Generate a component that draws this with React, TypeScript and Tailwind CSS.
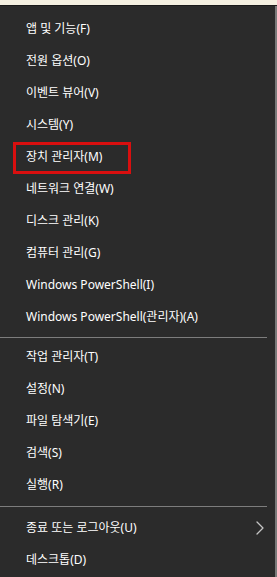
import { ChevronRight } from "lucide-react";

type Item = { label: string; highlight?: boolean; submenu?: boolean };

const groups: Item[][] = [
  [
    { label: "앱 및 기능(F)" },
    { label: "전원 옵션(O)" },
    { label: "이벤트 뷰어(V)" },
    { label: "시스템(Y)" },
    { label: "장치 관리자(M)", highlight: true },
    { label: "네트워크 연결(W)" },
    { label: "디스크 관리(K)" },
    { label: "컴퓨터 관리(G)" },
    { label: "Windows PowerShell(I)" },
    { label: "Windows PowerShell(관리자)(A)" },
  ],
  [
    { label: "작업 관리자(T)" },
    { label: "설정(N)" },
    { label: "파일 탐색기(E)" },
    { label: "검색(S)" },
    { label: "실행(R)" },
  ],
  [{ label: "종료 또는 로그아웃(U)", submenu: true }, { label: "데스크톱(D)" }],
];

function Row({ item }: { item: Item }) {
  return (
    <li className="relative flex h-8 items-center pl-[26px] pr-[14px] text-[12px] text-white">
      <span className="flex-1">{item.label}</span>
      {item.submenu && (
        <ChevronRight className="-mr-[11px] h-6 w-6 text-[#c4c4c4]" strokeWidth={1.3} />
      )}
      {item.highlight && (
        <span className="pointer-events-none absolute left-[13px] top-px h-[32px] w-[118px] border-[3px] border-[#d90f0f]" />
      )}
    </li>
  );
}

export default function App() {
  return (
    <div
      className="flex h-[577px] w-[277px] flex-col overflow-hidden bg-[#2b2b2b]"
      style={{ fontFamily: '"Noto Sans", "Noto Sans CJK KR", sans-serif' }}
    >
      <div className="h-[5px] bg-[#f5f0e1]" />
      <div className="h-px bg-[#1a1a1a]" />
      <div className="flex flex-1">
        <div className="flex-1 pt-[7px]">
          {groups.map((g, i) => (
            <div key={i}>
              {i === 1 && (
                <div className="flex h-2 items-center pr-[8px]">
                  <div className="h-px w-full bg-[#7d7d7d]" />
                </div>
              )}
              {i === 2 && (
                <div className="flex h-[11px] items-center pr-[8px]">
                  <div className="h-px w-full bg-[#7d7d7d]" />
                </div>
              )}
              <ul>
                {g.map((item) => (
                  <Row key={item.label} item={item} />
                ))}
              </ul>
            </div>
          ))}
        </div>
        <div className="w-[2px] bg-[#7a7a7a]" />
      </div>
    </div>
  );
}
